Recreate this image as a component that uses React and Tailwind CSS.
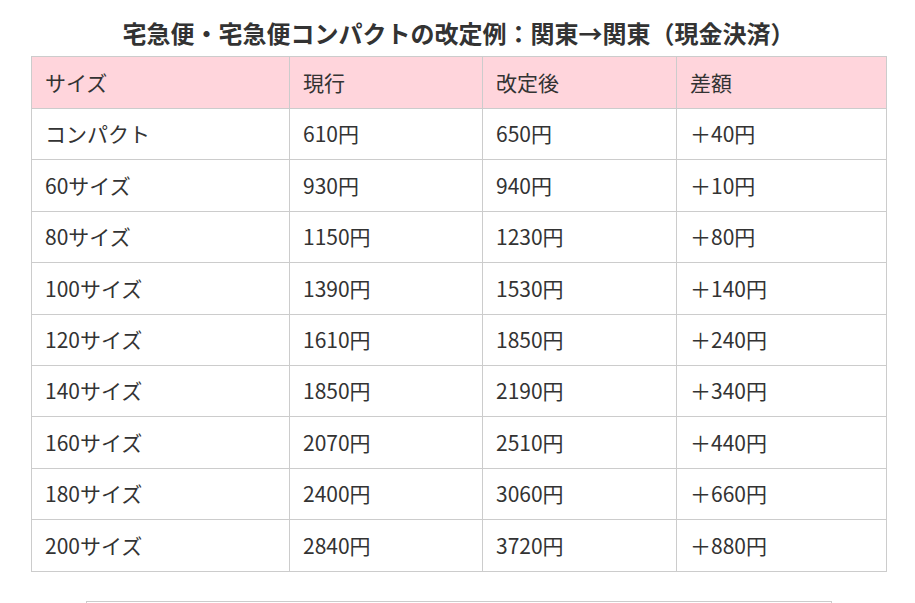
import React from "react";

const rows = [
  ["コンパクト", "610円", "650円", "＋40円"],
  ["60サイズ", "930円", "940円", "＋10円"],
  ["80サイズ", "1150円", "1230円", "＋80円"],
  ["100サイズ", "1390円", "1530円", "＋140円"],
  ["120サイズ", "1610円", "1850円", "＋240円"],
  ["140サイズ", "1850円", "2190円", "＋340円"],
  ["160サイズ", "2070円", "2510円", "＋440円"],
  ["180サイズ", "2400円", "3060円", "＋660円"],
  ["200サイズ", "2840円", "3720円", "＋880円"],
];

const cols = ["w-[258px]", "w-[193px]", "w-[194px]", "w-[210px]"];

export default function App() {
  return (
    <div
      className="bg-white w-[915px] h-[603px] overflow-hidden text-[#333]"
      style={{ fontFamily: '"Noto Sans CJK JP", "Noto Sans", sans-serif' }}
    >
      <h2 className="pt-[19px] mb-[9px] leading-[28px] text-[24px] font-bold text-center pl-[2px]">
        宅急便・宅急便コンパクトの改定例：関東→関東（現金決済）
      </h2>
      <table className="ml-[31px] w-[855px] border-collapse table-fixed text-[21px]">
        <thead>
          <tr className="bg-[#ffd5dc] h-[52px]">
            {["サイズ", "現行", "改定後", "差額"].map((h, i) => (
              <th
                key={h}
                className={`${cols[i]} border border-[#cccccc] px-[13px] text-left font-normal`}
              >
                {h}
              </th>
            ))}
          </tr>
        </thead>
        <tbody>
          {rows.map((r) => (
            <tr key={r[0]} className="h-[51.4px]">
              {r.map((c, i) => (
                <td key={i} className="border border-[#cccccc] px-[13px]">
                  {c}
                </td>
              ))}
            </tr>
          ))}
        </tbody>
      </table>
      <div className="mt-[29px] ml-[86px] w-[746px] h-[20px] border border-[#cccccc]" />
    </div>
  );
}
